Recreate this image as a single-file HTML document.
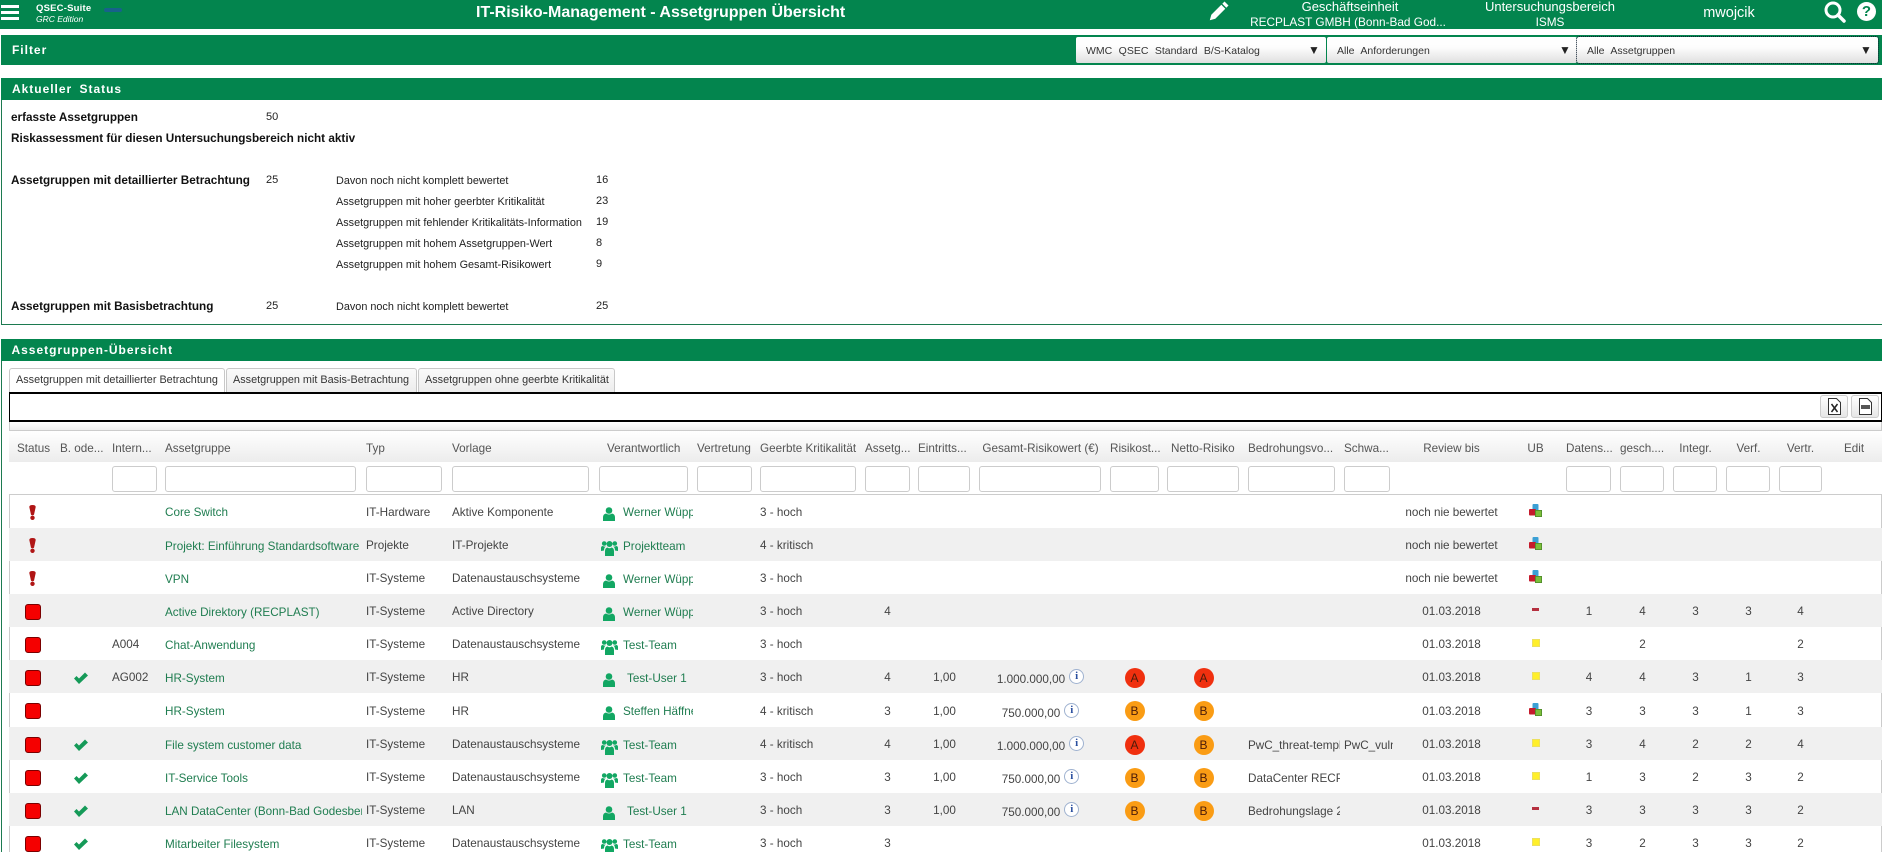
<!DOCTYPE html>
<html lang="de"><head><meta charset="utf-8"><title>IT-Risiko-Management - Assetgruppen Übersicht</title>
<style>
*{box-sizing:border-box}
html,body{margin:0;padding:0;width:1892px;height:868px;overflow:hidden;background:#fff;font-family:"Liberation Sans",Arial,sans-serif}
.a{position:absolute;white-space:nowrap}
.g{background:#03854e}
.h{color:#fff;font-weight:bold;font-size:12px;letter-spacing:.98px;word-spacing:3px;left:12px}
.w{color:#fff;font-size:11.8px;text-align:center}
.sel{height:26px;top:37px;background:linear-gradient(#fff,#fdfdfd 40%,#dfdfdf);border-radius:2px;font-size:10.5px;color:#333;word-spacing:3.5px;line-height:28px;padding-left:10px}
.sel b{position:absolute;top:-1px;font-size:12px;font-weight:normal;color:#222}
.bl{font-size:11.75px;font-weight:bold;color:#111;left:11px}
.nm{font-size:11px;color:#222}
.sb{font-size:10.85px;color:#222;left:336px}
.tab{top:368px;height:25px;border:1px solid #c8c8c8;border-bottom:0;border-radius:3px 3px 0 0;font-size:10.85px;color:#333;line-height:23px;padding-left:6px;background:linear-gradient(#fafafa,#ececec)}
table{position:absolute;left:9px;top:0;table-layout:fixed;border-collapse:collapse;width:1873px;font-size:11.7px;color:#444}
td{padding:2px 0 0;white-space:nowrap;overflow:hidden;vertical-align:middle}
tr.hd td{height:31px;color:#555;background:linear-gradient(#fff,#ececec);padding-top:3px}
tr.fl td{height:32px;border-bottom:1px solid #ccc;background:#fff;padding-top:4px;vertical-align:top}
input{display:block;height:26px;border:1px solid #ccc;border-radius:3px;background:#fff;padding:0;margin:0}
tr.o td{background:#f0f0f0}
.c{text-align:center;padding-right:8px}
.v{text-align:center}
.n{text-align:center;padding-right:13px}
.l{color:#1f7d50}
.clip{overflow:hidden;padding-top:4px;padding-bottom:3px}
svg{display:inline-block;vertical-align:middle}
.clip svg{vertical-align:-1px;margin-top:-5px;margin-bottom:-4px}
.clip svg[height="16"]{vertical-align:-2px}
.s{display:block;width:16px;height:16px;margin-left:16px;background:#f50000;border:1px solid #7a0000;border-radius:3px}
.e{display:block;margin-left:20px}
.k{display:block;margin-left:14px}
.i{display:inline-block;width:15px;height:15px;border:1px solid #9fb2d0;border-radius:50%;font:bold 11px/13px "Liberation Serif",serif;color:#2a4f9f;text-align:center;vertical-align:4px;margin-left:4px;background:#fff}
.r{display:inline-block;width:20px;height:20px;border-radius:50%;font-size:12px;line-height:20px;text-align:center;color:#4a1b0a}
.ra{background:#f0300f}.rb{background:#fa9c14}
.u{display:block;margin:-4px auto 0}
.y{display:block;width:8px;height:8px;margin:-4px auto 0;background:#ffef2a;border:1px solid #ece060}
.m{display:block;width:7px;height:3px;margin:-4px auto 0;background:#b5303f}
</style></head><body>
<svg width="0" height="0" style="position:absolute"><defs>
<symbol id="p" viewBox="0 0 12 14"><circle cx="6" cy="3.5" r="3.3" fill="#12a763"/><path d="M0 14V10.5Q0 7 3 6.5Q6 8.500 9 6.500Q12 7 12 10.500V14Z" fill="#12a763"/></symbol>
<symbol id="t" viewBox="0 0 17 16"><g fill="#12a763"><circle cx="8.500" cy="4" r="3"/><circle cx="3.200" cy="3.500" r="2.300"/><circle cx="13.800" cy="3.500" r="2.300"/><path d="M4 16V11Q4 8 6.500 7.500Q8.500 9 10.500 7.500Q13 8 13 11V16Z"/><path d="M0 11V8Q0 6 2 6Q3.500 7 5 6.300Q3 7.500 3 10.500Z"/><path d="M17 11V8Q17 6 15 6Q13.500 7 12 6.300Q14 7.500 14 10.500Z"/></g></symbol>
<symbol id="x" viewBox="0 0 7 15"><path d="M.3 2Q.3 0 3.500 0T6.700 2L5 9.800Q3.500 10.800 2 9.800Z" fill="#b01515"/><circle cx="3.500" cy="12.800" r="2.200" fill="#b01515"/></symbol>
<symbol id="k" viewBox="0 0 14 12"><path d="M0 6.500L2.500 4L5 6.500L11 .5L14 3.500L5 12Z" fill="#159a58"/></symbol>
<symbol id="cu" viewBox="0 0 13 13"><rect x="3.500" y="0" width="6" height="6.500" rx="1" fill="#3ba0d5"/><rect x="0" y="5" width="7" height="6.500" rx="1" fill="#c51b2c"/><rect x="6.400" y="6.400" width="6.200" height="6.200" fill="#7cbf3a" stroke="#4d8a2a" stroke-width=".8"/></symbol>
</defs></svg>

<div class="a g" style="left:0;top:0;width:1882px;height:29px"></div>
<div class="a" style="left:1px;top:5px;width:18px;height:3px;background:#fff"></div>
<div class="a" style="left:1px;top:11px;width:18px;height:3px;background:#fff"></div>
<div class="a" style="left:1px;top:17px;width:18px;height:3px;background:#fff"></div>
<div class="a" style="left:36px;top:3px;color:#fff;font:bold 9.500px 'Liberation Sans',sans-serif;letter-spacing:.2px">QSEC-Suite</div>
<div class="a" style="left:36px;top:14px;color:#fff;font:italic 8.500px 'Liberation Sans',sans-serif">GRC Edition</div>
<div class="a" style="left:104px;top:8px;width:18px;height:4px;background:#17628a;border-radius:2px"></div>
<div class="a" style="left:476px;top:4px;color:#fff;font:bold 16px 'Liberation Sans',sans-serif">IT-Risiko-Management - Assetgruppen Übersicht</div>
<svg class="a" style="left:1209px;top:1px" width="20" height="20" viewBox="0 0 20 20"><path d="M15.500 .5L19.500 4.500L17.300 6.700L13.300 2.700ZM12.300 3.700L16.300 7.700L6.300 17.700L.8 19.200L2.300 13.700Z" fill="#fff"/></svg>
<div class="a w" style="left:1250px;top:-1px;width:200px;font-size:13px">Geschäftseinheit</div>
<div class="a w" style="left:1248px;top:15px;width:200px">RECPLAST GMBH (Bonn-Bad God...</div>
<div class="a w" style="left:1450px;top:-1px;width:200px;font-size:13px">Untersuchungsbereich</div>
<div class="a w" style="left:1450px;top:15px;width:200px">ISMS</div>
<div class="a w" style="left:1679px;top:5px;width:100px;font-size:14.500px">mwojcik</div>
<svg class="a" style="left:1824px;top:1px" width="22" height="22" viewBox="0 0 22 22"><circle cx="9" cy="9" r="7" fill="none" stroke="#fff" stroke-width="3"/><path d="M14 14L20 20" stroke="#fff" stroke-width="3.500" stroke-linecap="round"/></svg>
<div class="a" style="left:1857px;top:2px;width:19px;height:19px;border-radius:50%;background:#fff;color:#03854e;font:bold 15px/19px 'Liberation Sans',sans-serif;text-align:center">?</div>

<div class="a g" style="left:1px;top:35px;width:1881px;height:30px"></div>
<div class="a h" style="top:43px">Filter</div>
<div class="a sel" style="left:1076px;width:250px">WMC QSEC Standard B/S-Katalog<b style="left:232px">▼</b></div>
<div class="a sel" style="left:1327px;width:250px">Alle Anforderungen<b style="left:232px">▼</b></div>
<div class="a sel" style="left:1577px;width:301px;outline:1px dotted #123">Alle Assetgruppen<b style="left:283px">▼</b></div>

<div class="a g" style="left:1px;top:78px;width:1881px;height:22px"></div>
<div class="a h" style="top:82px">Aktueller Status</div>
<div class="a" style="left:1px;top:100px;width:1881px;height:225px;border-left:1px solid #1c7a50;border-bottom:1px solid #1c7a50"></div>
<div class="a bl" style="top:111px">erfasste Assetgruppen</div><div class="a nm" style="left:266px;top:111px">50</div>
<div class="a bl" style="top:132px">Riskassessment für diesen Untersuchungsbereich nicht aktiv</div>
<div class="a bl" style="top:174px">Assetgruppen mit detaillierter Betrachtung</div><div class="a nm" style="left:266px;top:174px">25</div>
<div class="a sb" style="top:175px">Davon noch nicht komplett bewertet</div><div class="a nm" style="left:596px;top:174px">16</div>
<div class="a sb" style="top:196px">Assetgruppen mit hoher geerbter Kritikalität</div><div class="a nm" style="left:596px;top:195px">23</div>
<div class="a sb" style="top:217px">Assetgruppen mit fehlender Kritikalitäts-Information</div><div class="a nm" style="left:596px;top:216px">19</div>
<div class="a sb" style="top:238px">Assetgruppen mit hohem Assetgruppen-Wert</div><div class="a nm" style="left:596px;top:237px">8</div>
<div class="a sb" style="top:259px">Assetgruppen mit hohem Gesamt-Risikowert</div><div class="a nm" style="left:596px;top:258px">9</div>
<div class="a bl" style="top:300px">Assetgruppen mit Basisbetrachtung</div><div class="a nm" style="left:266px;top:300px">25</div>
<div class="a sb" style="top:301px">Davon noch nicht komplett bewertet</div><div class="a nm" style="left:596px;top:300px">25</div>

<div class="a g" style="left:1px;top:339px;width:1881px;height:22px"></div>
<div class="a h" style="top:343px;left:11.500px">Assetgruppen-Übersicht</div>
<div class="a" style="left:1px;top:361px;width:1px;height:491px;background:#1c7a50"></div>
<div class="a" style="left:9px;top:421px;width:1px;height:431px;background:#ccc"></div>
<div class="a" style="left:1881px;top:421px;width:1px;height:431px;background:#ccc"></div>
<div class="a tab" style="left:9px;width:216px;background:#fff;height:25px">Assetgruppen mit detaillierter Betrachtung</div>
<div class="a tab" style="left:226px;width:191px">Assetgruppen mit Basis-Betrachtung</div>
<div class="a tab" style="left:418px;width:197px">Assetgruppen ohne geerbte Kritikalität</div>
<div class="a" style="left:9px;top:392px;width:1873px;height:30px;border:1px solid #000;border-width:2px 1px;background:#fff"></div>
<div class="a" style="left:1820px;top:395px;width:28px;height:23px;border:1px solid #ccc;border-radius:3px;background:linear-gradient(#fff,#e6e6e6)"><svg width="13" height="17" viewBox="0 0 13 17" style="position:absolute;left:7px;top:2px"><path d="M.5.5H8.500L12.500 4.500V16.500H.5Z" fill="#fff" stroke="#333"/><path d="M3.500 6L9.500 14M9.500 6L3.500 14" stroke="#222" stroke-width="1.500"/></svg></div>
<div class="a" style="left:1851px;top:395px;width:28px;height:23px;border:1px solid #ccc;border-radius:3px;background:linear-gradient(#fff,#e6e6e6)"><svg width="13" height="17" viewBox="0 0 13 17" style="position:absolute;left:7px;top:2px"><path d="M.5.5H8.500L12.500 4.500V16.500H.5Z" fill="#fff" stroke="#333"/><rect x="2" y="7" width="9" height="4" fill="#555"/></svg></div>
<div class="a" style="left:10px;top:422px;width:1871px;height:9px;background:linear-gradient(#fff,#eee);border-bottom:1px solid #ccc"></div>

<div class="a" style="left:0;top:431px;width:1882px;height:421px;overflow:hidden">
<table>
<colgroup><col style="width:51px"><col style="width:52px"><col style="width:53px"><col style="width:201px"><col style="width:86px"><col style="width:147px"><col style="width:98px"><col style="width:63px"><col style="width:105px"><col style="width:53px"><col style="width:61px"><col style="width:131px"><col style="width:57px"><col style="width:81px"><col style="width:96px"><col style="width:54px"><col style="width:107px"><col style="width:61px"><col style="width:54px"><col style="width:53px"><col style="width:53px"><col style="width:53px"><col style="width:56px"><col style="width:47px"></colgroup>
<tr class="hd"><td style="padding-left:8px">Status</td><td>B. ode...</td><td>Intern...</td><td>Assetgruppe</td><td>Typ</td><td>Vorlage</td><td style="padding-left:8px">Verantwortlich</td><td>Vertretung</td><td>Geerbte Kritikalität</td><td>Assetg...</td><td>Eintritts...</td><td class="c">Gesamt-Risikowert (€)</td><td>Risikost...</td><td style="padding-left:4px">Netto-Risiko</td><td>Bedrohungsvo...</td><td>Schwa...</td><td class="v">Review bis</td><td class="v">UB</td><td>Datens...</td><td>gesch....</td><td class="c">Integr.</td><td class="c">Verf.</td><td class="n">Vertr.</td><td style="padding-left:9px">Edit</td></tr>
<tr class="fl"><td></td><td></td><td><input style="width:45px"></td><td><input style="width:191px"></td><td><input style="width:76px"></td><td><input style="width:137px"></td><td><input style="width:89px"></td><td><input style="width:55px"></td><td><input style="width:96px"></td><td><input style="width:45px"></td><td><input style="width:52px"></td><td><input style="width:122px"></td><td><input style="width:49px"></td><td><input style="width:72px"></td><td><input style="width:87px"></td><td><input style="width:46px"></td><td></td><td></td><td><input style="width:45px"></td><td><input style="width:44px"></td><td><input style="width:44px"></td><td><input style="width:44px"></td><td><input style="width:43px"></td><td></td></tr>

<tr style="height:34px"><td><svg class="e" width="7" height="15"><use href="#x"/></svg></td><td></td><td></td><td class="l"><div class="clip" style="width:197px">Core Switch</div></td><td>IT-Hardware</td><td>Aktive Komponente</td><td class="l"><div class="clip" style="width:94px;padding-left:4px"><svg width="12" height="14" style="margin-right:8px"><use href="#p"/></svg>Werner Wüpper</div></td><td></td><td>3 - hoch</td><td></td><td></td><td></td><td></td><td></td><td></td><td></td><td class="v">noch nie bewertet</td><td><svg class="u" width="13" height="13"><use href="#cu"/></svg></td><td></td><td></td><td></td><td></td><td></td><td></td></tr>

<tr class="o" style="height:33px"><td><svg class="e" width="7" height="15"><use href="#x"/></svg></td><td></td><td></td><td class="l"><div class="clip" style="width:197px">Projekt: Einführung Standardsoftware</div></td><td>Projekte</td><td>IT-Projekte</td><td class="l"><div class="clip" style="width:94px;padding-left:2px"><svg width="17" height="16" style="margin-right:5px"><use href="#t"/></svg>Projektteam</div></td><td></td><td>4 - kritisch</td><td></td><td></td><td></td><td></td><td></td><td></td><td></td><td class="v">noch nie bewertet</td><td><svg class="u" width="13" height="13"><use href="#cu"/></svg></td><td></td><td></td><td></td><td></td><td></td><td></td></tr>

<tr style="height:33px"><td><svg class="e" width="7" height="15"><use href="#x"/></svg></td><td></td><td></td><td class="l"><div class="clip" style="width:197px">VPN</div></td><td>IT-Systeme</td><td>Datenaustauschsysteme</td><td class="l"><div class="clip" style="width:94px;padding-left:4px"><svg width="12" height="14" style="margin-right:8px"><use href="#p"/></svg>Werner Wüpper</div></td><td></td><td>3 - hoch</td><td></td><td></td><td></td><td></td><td></td><td></td><td></td><td class="v">noch nie bewertet</td><td><svg class="u" width="13" height="13"><use href="#cu"/></svg></td><td></td><td></td><td></td><td></td><td></td><td></td></tr>

<tr class="o" style="height:33px"><td><span class="s"></span></td><td></td><td></td><td class="l"><div class="clip" style="width:197px">Active Direktory (RECPLAST)</div></td><td>IT-Systeme</td><td>Active Directory</td><td class="l"><div class="clip" style="width:94px;padding-left:4px"><svg width="12" height="14" style="margin-right:8px"><use href="#p"/></svg>Werner Wüpper</div></td><td></td><td>3 - hoch</td><td class="c">4</td><td></td><td></td><td></td><td></td><td></td><td></td><td class="v">01.03.2018</td><td><span class="m"></span></td><td class="c">1</td><td class="c">4</td><td class="c">3</td><td class="c">3</td><td class="n">4</td><td></td></tr>

<tr style="height:33px"><td><span class="s"></span></td><td></td><td>A004</td><td class="l"><div class="clip" style="width:197px">Chat-Anwendung</div></td><td>IT-Systeme</td><td>Datenaustauschsysteme</td><td class="l"><div class="clip" style="width:94px;padding-left:2px"><svg width="17" height="16" style="margin-right:5px"><use href="#t"/></svg>Test-Team</div></td><td></td><td>3 - hoch</td><td></td><td></td><td></td><td></td><td></td><td></td><td></td><td class="v">01.03.2018</td><td><span class="y"></span></td><td></td><td class="c">2</td><td></td><td></td><td class="n">2</td><td></td></tr>

<tr class="o" style="height:33px"><td><span class="s"></span></td><td><svg class="k" width="14" height="12"><use href="#k"/></svg></td><td>AG002</td><td class="l"><div class="clip" style="width:197px">HR-System</div></td><td>IT-Systeme</td><td>HR</td><td class="l"><div class="clip" style="width:94px;padding-left:4px"><svg width="12" height="14" style="margin-right:12px"><use href="#p"/></svg>Test-User 1</div></td><td></td><td>3 - hoch</td><td class="c">4</td><td class="c">1,00</td><td class="c">1.000.000,00<span class="i">i</span></td><td class="c"><span class="r ra">A</span></td><td class="c"><span class="r ra">A</span></td><td></td><td></td><td class="v">01.03.2018</td><td><span class="y"></span></td><td class="c">4</td><td class="c">4</td><td class="c">3</td><td class="c">1</td><td class="n">3</td><td></td></tr>

<tr style="height:34px"><td><span class="s"></span></td><td></td><td></td><td class="l"><div class="clip" style="width:197px">HR-System</div></td><td>IT-Systeme</td><td>HR</td><td class="l"><div class="clip" style="width:94px;padding-left:4px"><svg width="12" height="14" style="margin-right:8px"><use href="#p"/></svg>Steffen Häffner</div></td><td></td><td>4 - kritisch</td><td class="c">3</td><td class="c">1,00</td><td class="c">750.000,00<span class="i">i</span></td><td class="c"><span class="r rb">B</span></td><td class="c"><span class="r rb">B</span></td><td></td><td></td><td class="v">01.03.2018</td><td><svg class="u" width="13" height="13"><use href="#cu"/></svg></td><td class="c">3</td><td class="c">3</td><td class="c">3</td><td class="c">1</td><td class="n">3</td><td></td></tr>

<tr class="o" style="height:33px"><td><span class="s"></span></td><td><svg class="k" width="14" height="12"><use href="#k"/></svg></td><td></td><td class="l"><div class="clip" style="width:197px">File system customer data</div></td><td>IT-Systeme</td><td>Datenaustauschsysteme</td><td class="l"><div class="clip" style="width:94px;padding-left:2px"><svg width="17" height="16" style="margin-right:5px"><use href="#t"/></svg>Test-Team</div></td><td></td><td>4 - kritisch</td><td class="c">4</td><td class="c">1,00</td><td class="c">1.000.000,00<span class="i">i</span></td><td class="c"><span class="r ra">A</span></td><td class="c"><span class="r rb">B</span></td><td><div class="clip" style="width:92px">PwC_threat-template</div></td><td><div class="clip" style="width:49px">PwC_vulnerabilities</div></td><td class="v">01.03.2018</td><td><span class="y"></span></td><td class="c">3</td><td class="c">4</td><td class="c">2</td><td class="c">2</td><td class="n">4</td><td></td></tr>

<tr style="height:33px"><td><span class="s"></span></td><td><svg class="k" width="14" height="12"><use href="#k"/></svg></td><td></td><td class="l"><div class="clip" style="width:197px">IT-Service Tools</div></td><td>IT-Systeme</td><td>Datenaustauschsysteme</td><td class="l"><div class="clip" style="width:94px;padding-left:2px"><svg width="17" height="16" style="margin-right:5px"><use href="#t"/></svg>Test-Team</div></td><td></td><td>3 - hoch</td><td class="c">3</td><td class="c">1,00</td><td class="c">750.000,00<span class="i">i</span></td><td class="c"><span class="r rb">B</span></td><td class="c"><span class="r rb">B</span></td><td><div class="clip" style="width:92px">DataCenter RECPLAST</div></td><td></td><td class="v">01.03.2018</td><td><span class="y"></span></td><td class="c">1</td><td class="c">3</td><td class="c">2</td><td class="c">3</td><td class="n">2</td><td></td></tr>

<tr class="o" style="height:33px"><td><span class="s"></span></td><td><svg class="k" width="14" height="12"><use href="#k"/></svg></td><td></td><td class="l"><div class="clip" style="width:197px">LAN DataCenter (Bonn-Bad Godesberg)</div></td><td>IT-Systeme</td><td>LAN</td><td class="l"><div class="clip" style="width:94px;padding-left:4px"><svg width="12" height="14" style="margin-right:12px"><use href="#p"/></svg>Test-User 1</div></td><td></td><td>3 - hoch</td><td class="c">3</td><td class="c">1,00</td><td class="c">750.000,00<span class="i">i</span></td><td class="c"><span class="r rb">B</span></td><td class="c"><span class="r rb">B</span></td><td><div class="clip" style="width:92px">Bedrohungslage 2017</div></td><td></td><td class="v">01.03.2018</td><td><span class="m"></span></td><td class="c">3</td><td class="c">3</td><td class="c">3</td><td class="c">3</td><td class="n">2</td><td></td></tr>

<tr style="height:33px"><td><span class="s"></span></td><td><svg class="k" width="14" height="12"><use href="#k"/></svg></td><td></td><td class="l"><div class="clip" style="width:197px">Mitarbeiter Filesystem</div></td><td>IT-Systeme</td><td>Datenaustauschsysteme</td><td class="l"><div class="clip" style="width:94px;padding-left:2px"><svg width="17" height="16" style="margin-right:5px"><use href="#t"/></svg>Test-Team</div></td><td></td><td>3 - hoch</td><td class="c">3</td><td></td><td></td><td></td><td></td><td></td><td></td><td class="v">01.03.2018</td><td><span class="y"></span></td><td class="c">3</td><td class="c">2</td><td class="c">3</td><td class="c">3</td><td class="n">2</td><td></td></tr>
</table>
</div>
</body></html>
